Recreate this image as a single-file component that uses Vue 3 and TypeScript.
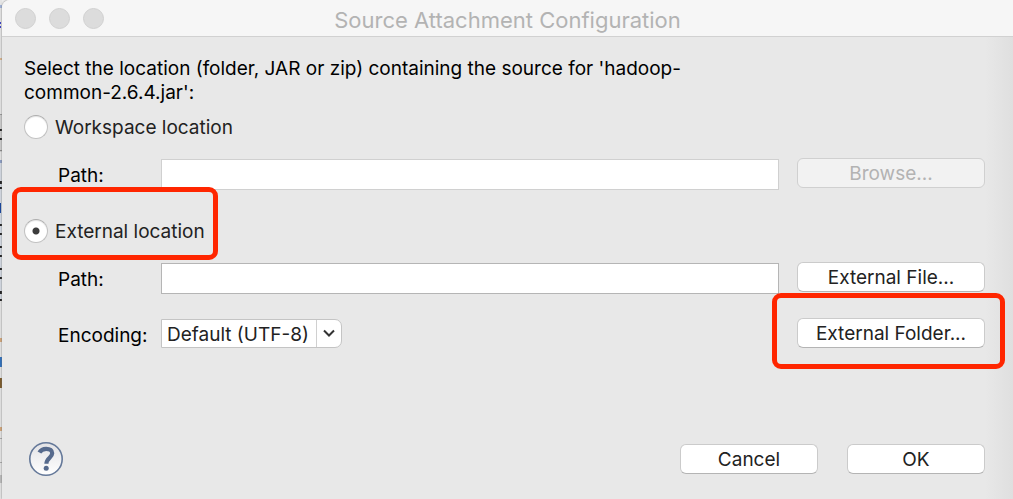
<script setup lang="ts">
import { ref } from 'vue'

type Source = 'workspace' | 'external'

const source = ref<Source>('external')
const workspacePath = ref('')
const externalPath = ref('')
const encoding = ref('Default (UTF-8)')
</script>

<template>
  <div class="desktop">
    <svg class="editor-edge" width="2" height="499" viewBox="0 0 2 499" aria-hidden="true">
      <rect width="2" height="499" fill="#e4e4e4" />
      <rect y="5" width="2" height="3" fill="#9fb1d6" />
      <rect y="22" width="1" height="2" fill="#3a3fc4" />
      <rect y="26" width="1" height="2" fill="#3a3fc4" />
      <rect y="58" width="2" height="2" fill="#d8b48c" />
      <rect y="114" width="2" height="38" fill="#cccccc" />
      <rect y="114" width="2" height="1" fill="#999999" />
      <rect y="129" width="2" height="2" fill="#222222" />
      <rect y="138" width="2" height="2" fill="#222222" />
      <rect y="150" width="2" height="1" fill="#888888" />
      <rect y="160" width="2" height="3" fill="#8b9cc4" />
      <rect y="163" width="2" height="137" fill="#d3d9e2" />
      <rect y="181" width="2" height="3" fill="#222222" />
      <rect y="187" width="2" height="2" fill="#222222" />
      <rect y="203" width="1" height="10" fill="#17459c" />
      <rect y="224" width="2" height="2" fill="#222222" />
      <rect y="233" width="2" height="2" fill="#222222" />
      <rect y="246" width="2" height="2" fill="#222222" />
      <rect y="255" width="2" height="2" fill="#222222" />
      <rect y="268" width="2" height="2" fill="#222222" />
      <rect y="277" width="2" height="2" fill="#222222" />
      <rect y="291" width="2" height="3" fill="#222222" />
      <rect y="299" width="2" height="2" fill="#222222" />
      <rect y="338" width="2" height="4" fill="#d3a679" />
      <rect y="357" width="2" height="10" fill="#2f70bd" />
      <rect y="378" width="2" height="10" fill="#7c5a2a" />
      <rect y="427" width="2" height="4" fill="#d3a679" />
      <rect y="438" width="2" height="1" fill="#aaaaaa" />
      <rect y="462" width="2" height="1" fill="#aaaaaa" />
      <rect y="475" width="2" height="8" fill="#bbbbbb" />
    </svg>

    <main class="dialog">
      <header class="titlebar">
        <div class="lights">
          <button type="button" class="light" aria-label="Close"></button>
          <button type="button" class="light" aria-label="Minimize"></button>
          <button type="button" class="light" aria-label="Zoom"></button>
        </div>
        <h1 class="title">Source Attachment Configuration</h1>
      </header>

      <form class="content" @submit.prevent>
        <p class="message">Select the location (folder, JAR or zip) containing the source for 'hadoop-<br />common-2.6.4.jar':</p>

        <div class="choice">
          <label class="option">
            <input v-model="source" class="radio" type="radio" name="source" value="workspace" />
            <span class="option-text">Workspace location</span>
          </label>
        </div>

        <div class="row">
          <label class="caption" for="workspace-path">Path:</label>
          <input id="workspace-path" v-model="workspacePath" class="field" type="text" :disabled="source !== 'workspace'" />
          <button type="button" class="push" :disabled="source !== 'workspace'">Browse...</button>
        </div>

        <div class="choice choice-external">
          <label class="option marked marked-option">
            <input v-model="source" class="radio" type="radio" name="source" value="external" />
            <span class="option-text">External location</span>
          </label>
        </div>

        <div class="row">
          <label class="caption" for="external-path">Path:</label>
          <input id="external-path" v-model="externalPath" class="field" type="text" />
          <button type="button" class="push">External File...</button>
        </div>

        <div class="row encoding-row">
          <label class="caption" for="encoding">Encoding:</label>
          <div class="combo">
            <select id="encoding" v-model="encoding" class="select">
              <option>Default (UTF-8)</option>
            </select>
            <svg class="arrow" width="26" height="27" viewBox="0 0 26 27" aria-hidden="true">
              <path d="M0.5 0V27" stroke="#d0d0d0" />
              <path d="M8 10.5L13 15.5L18 10.5" fill="none" stroke="#333" stroke-width="2" />
            </svg>
          </div>
          <div class="marked marked-button">
            <button type="button" class="push">External Folder...</button>
          </div>
        </div>

        <footer class="actions">
          <button type="button" class="help" aria-label="Help">
            <svg width="36" height="36" viewBox="0 0 36 36" aria-hidden="true">
              <defs>
                <linearGradient id="help-fill" x1="0" y1="0" x2="0" y2="1">
                  <stop offset="0" stop-color="#e2e2e5" />
                  <stop offset="1" stop-color="#ffffff" />
                </linearGradient>
              </defs>
              <circle cx="18" cy="18" r="16.2" fill="url(#help-fill)" stroke="#647899" stroke-width="1.6" />
              <path d="M11.4 11.6C12.8 9 15 7.8 18.2 7.8C22 7.8 24.2 9.6 24.2 12.3C24.2 16.6 18.4 17 18.4 22.8" fill="none" stroke="#566a8d" stroke-width="4.2" />
              <circle cx="18.2" cy="27.3" r="2.5" fill="#566a8d" />
            </svg>
          </button>
          <button type="button" class="push action">Cancel</button>
          <button type="submit" class="push action">OK</button>
        </footer>
      </form>
    </main>
  </div>
</template>

<style>
body {
  margin: 0;
  background: #e8e8e8;
}
</style>

<style scoped>
.desktop {
  display: flex;
  min-height: 100vh;
  overflow: hidden;
  background: #ececec;
  color: #000;
  font-family: Inter, Roboto, sans-serif;
  font-size: 19px;
  line-height: 24px;
}

.editor-edge {
  flex: none;
}

.dialog {
  flex: 1;
  box-sizing: border-box;
  overflow: hidden;
  border-radius: 8px 0 0 0;
  background: linear-gradient(to left, #dfdfdf, #e8e8e8 28px);
  box-shadow: 0 0 2px #666;
}

.titlebar {
  display: grid;
  grid-template-columns: 1fr auto 1fr;
  align-items: center;
  height: 36px;
  border-bottom: 1px solid #d1d1d1;
  background: #f6f6f6;
}

.lights {
  display: flex;
  gap: 13px;
  padding-left: 13px;
}

.light {
  box-sizing: border-box;
  width: 21px;
  height: 21px;
  padding: 0;
  border: 1px solid #d0d0d0;
  border-radius: 50%;
  background: #dcdcdc;
}

.title {
  margin: 0;
  padding-top: 4px;
  color: #b3b3b3;
  font-size: 22px;
  font-weight: 400;
}

.content {
  padding: 20px 28px 0 22px;
}

.message {
  margin: 0 0 10px;
}

.choice {
  display: flex;
}

.choice-external {
  margin-top: 5px;
}

.option {
  display: flex;
  align-items: center;
  gap: 7px;
  height: 24px;
  color: #222;
}

.option-text {
  padding-top: 2px;
}

.radio {
  appearance: none;
  box-sizing: border-box;
  width: 24px;
  height: 24px;
  margin: 0;
  border: 1px solid #c2c2c2;
  border-top-color: #adadad;
  border-radius: 50%;
  background: #fff;
  box-shadow: inset 0 1px 1px #e4e4e4;
}

.radio:checked {
  background: radial-gradient(circle, #3c3c3c 3px, #fff 4px);
}

.row {
  display: grid;
  grid-template-columns: 103px 1fr 188px;
  align-items: start;
  padding: 19px 0 24px 34px;
}

.caption {
  padding-top: 6px;
}

.field {
  box-sizing: border-box;
  width: calc(100% - 18px);
  height: 31px;
  margin: 1px 0 0;
  padding: 0 6px;
  border: 1px solid #b5b5b5;
  border-radius: 0;
  background: #fff;
  font: inherit;
}

.field:disabled {
  border-color: #d0d0d0;
}

.push {
  box-sizing: border-box;
  width: 100%;
  height: 30px;
  padding: 2px 0 0;
  border: 1px solid #cbcbcb;
  border-bottom-color: #b4b4b4;
  border-radius: 6px;
  background: #fff;
  color: #222;
  font: inherit;
}

.push:disabled {
  border-color: #d0d0d0;
  background: #f2f2f2;
  color: #b3b3b3;
}

.encoding-row {
  padding-top: 0;
}

.combo {
  position: relative;
  justify-self: start;
  margin-top: 1px;
}

.select {
  appearance: none;
  display: block;
  box-sizing: border-box;
  width: 181px;
  height: 29px;
  padding: 3px 30px 0 5px;
  border: 1px solid #c4c4c4;
  border-radius: 0 7px 7px 0;
  background: #fff;
  color: #222;
  font: inherit;
}

.arrow {
  position: absolute;
  top: 1px;
  right: 0;
  pointer-events: none;
}

.marked {
  position: relative;
}

.marked::after {
  position: absolute;
  border: 5px solid #ff2600;
  border-radius: 9px;
  content: '';
  pointer-events: none;
}

.marked-option::after {
  inset: -32px -13px -17px -12px;
}

.marked-button::after {
  inset: -25px -20px -21px -25px;
}

.actions {
  display: flex;
  align-items: center;
  gap: 29px;
  padding: 69px 0 16px 4px;
}

.help {
  display: flex;
  margin-right: auto;
  padding: 0;
  border: 0;
  background: none;
}

.action {
  width: 138px;
}
</style>
